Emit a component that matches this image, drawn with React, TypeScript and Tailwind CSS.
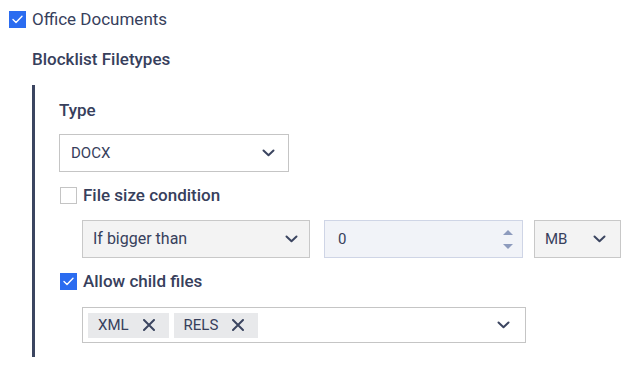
import React from 'react'

const Chevron = () => (
  <svg width="13" height="8" viewBox="0 0 13 8" fill="none" className="shrink-0">
    <path d="M1.5 1.5 L6.5 6.2 L11.5 1.5" stroke="#3b4560" strokeWidth="2" strokeLinecap="round" strokeLinejoin="round" />
  </svg>
)

const Cross = () => (
  <svg width="12" height="12" viewBox="0 0 12 12" fill="none" className="shrink-0">
    <path d="M1 1 L11 11 M11 1 L1 11" stroke="#3b4560" strokeWidth="2" strokeLinecap="round" />
  </svg>
)

function Checkbox({ checked }: { checked: boolean }) {
  if (!checked) {
    return <span className="w-[17px] h-[17px] border border-[#c4c4c4] bg-white shrink-0" />
  }
  return (
    <span className="w-[17px] h-[17px] bg-[#2b6cf0] flex items-center justify-center shrink-0">
      <svg width="11" height="9" viewBox="0 0 11 9" fill="none">
        <path d="M1 4.6 L4 7.5 L10 1.2" stroke="white" strokeWidth="1.4" strokeLinecap="round" strokeLinejoin="round" />
      </svg>
    </span>
  )
}

function Tag({ label }: { label: string }) {
  return (
    <span className="h-[25px] bg-[#e8e9eb] flex items-center pl-[10px] pr-[14px] gap-[14px]">
      <span>{label}</span>
      <Cross />
    </span>
  )
}

export default function App() {
  return (
    <div className="w-[625px] h-[374px] bg-white font-['Roboto',sans-serif] text-[#37405c] pt-[9px]">
      <div className="flex items-center gap-[6px] pl-[9px] h-[20px]">
        <Checkbox checked />
        <span className="text-[17px] leading-none">Office Documents</span>
      </div>

      <div className="pl-[32px] mt-[20px] text-[17px] font-medium leading-[20px]">Blocklist Filetypes</div>

      <div className="ml-[32px] mt-[16px] border-l-[3px] border-[#3b4560] pl-[24px] pt-[13px] pb-[14px]">
        <div className="text-[17px] font-medium leading-[24px]">Type</div>

        <div className="mt-[12px] w-[230px] h-[38px] border border-[#c5c5c5] bg-white flex items-center justify-between pl-[11px] pr-[13px] text-[15px]">
          <span>DOCX</span>
          <Chevron />
        </div>

        <div className="mt-[11px] h-[25px] flex items-center gap-[6px] pl-[1px]">
          <Checkbox checked={false} />
          <span className="text-[17px] font-medium">File size condition</span>
        </div>

        <div className="mt-[12px] pl-[23px] flex items-center text-[15px]">
          <div className="w-[228px] h-[38px] border border-[#c8c8c8] bg-[#f3f3f3] flex items-center justify-between pl-[10px] pr-[11px]">
            <span className="text-[16px]">If bigger than</span>
            <Chevron />
          </div>
          <div className="ml-[14px] w-[199px] h-[38px] border border-[#cfd5e6] bg-[#f1f3f8] flex items-center justify-between pl-[13px] pr-[9px]">
            <span>0</span>
            <div className="flex flex-col gap-[9px]">
              <svg width="10" height="5" viewBox="0 0 10 5"><path d="M0 5 L5 0 L10 5 Z" fill="#8d9bbd" /></svg>
              <svg width="10" height="5" viewBox="0 0 10 5"><path d="M0 0 L10 0 L5 5 Z" fill="#8d9bbd" /></svg>
            </div>
          </div>
          <div className="ml-[11px] w-[87px] h-[38px] border border-[#c8c8c8] bg-[#f3f3f3] flex items-center justify-between pl-[10px] pr-[14px]">
            <span>MB</span>
            <Chevron />
          </div>
        </div>

        <div className="mt-[11px] h-[25px] flex items-center gap-[6px] pl-[1px]">
          <Checkbox checked />
          <span className="text-[17px] font-medium">Allow child files</span>
        </div>

        <div className="mt-[13px] ml-[23px] w-[444px] h-[36px] border border-[#c5c5c5] bg-white flex items-center pl-[5px] pr-[15px] text-[15px]">
          <div className="flex items-center gap-[5px] flex-1">
            <Tag label="XML" />
            <Tag label="RELS" />
          </div>
          <Chevron />
        </div>
      </div>
    </div>
  )
}
